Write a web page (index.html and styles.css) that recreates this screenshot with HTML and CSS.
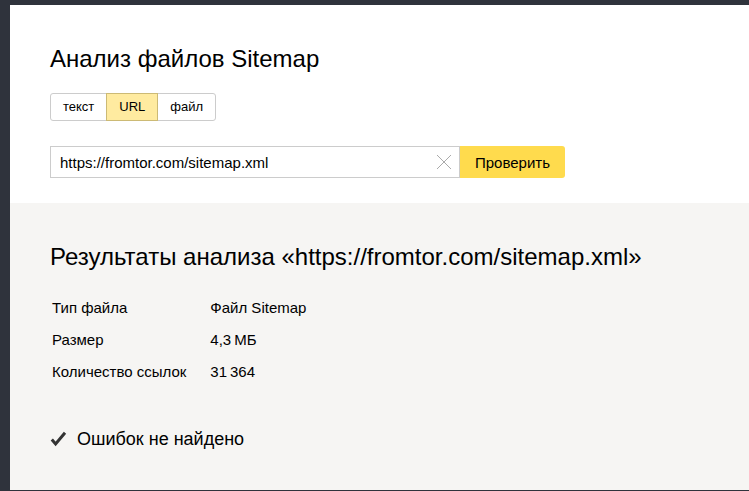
FILE: index.html
```html
<!DOCTYPE html>
<html lang="ru">
<head>
  <meta charset="UTF-8">
  <title>Анализ файлов Sitemap</title>
  <link rel="stylesheet" href="styles.css">
</head>
<body>
  <main class="page">
    <form class="check">
      <h1 class="title">Анализ файлов Sitemap</h1>

      <div class="tabs" role="radiogroup" aria-label="Источник">
        <label class="tab"><input type="radio" name="source" value="text">текст</label>
        <label class="tab"><input type="radio" name="source" value="url" checked>URL</label>
        <label class="tab"><input type="radio" name="source" value="file">файл</label>
      </div>

      <div class="search">
        <div class="search-field">
          <input class="search-input" type="text" aria-label="URL файла Sitemap" value="https://fromtor.com/sitemap.xml">
          <button class="search-clear" type="reset" aria-label="Очистить">
            <svg width="16" height="16" viewBox="0 0 16 16">
              <path d="M1 1l14 14M15 1L1 15" fill="none" stroke="#aaa" stroke-width="1"/>
            </svg>
          </button>
        </div>
        <button class="search-submit" type="button">Проверить</button>
      </div>
    </form>

    <section class="results">
      <h2 class="title">Результаты анализа «https://fromtor.com/sitemap.xml»</h2>

      <table class="info">
        <tr>
          <th scope="row">Тип файла</th>
          <td>Файл Sitemap</td>
        </tr>
        <tr>
          <th scope="row">Размер</th>
          <td>4,3&thinsp;МБ</td>
        </tr>
        <tr>
          <th scope="row">Количество ссылок</th>
          <td>31&thinsp;364</td>
        </tr>
      </table>

      <p class="status">
        <svg width="17" height="16" viewBox="0 0 17 16">
          <path d="M1.8 8.6l3.8 4.4L15 1.7" fill="none" stroke="#333" stroke-width="3"/>
        </svg>
        Ошибок не найдено
      </p>
    </section>
  </main>
</body>
</html>
```

FILE: styles.css
```css
* {
  box-sizing: border-box;
}

body {
  display: flex;
  min-height: 100vh;
  margin: 0;
  padding: 5px 0 1px 10px;
  background: #2f333c;
  color: #000;
  font-family: "Liberation Sans", Arial, sans-serif;
  font-size: 15px;
}

.page {
  display: flex;
  flex: 1;
  flex-direction: column;
  background: #fff;
}

.check {
  padding: 40px 40px 25px;
}

.title {
  margin: 0;
  font-size: 24px;
  font-weight: normal;
  line-height: 28px;
}

/* source switch */
.tabs {
  display: flex;
  width: fit-content;
  margin-top: 20px;
}

.tab {
  height: 28px;
  padding: 0 12px;
  border: 1px solid #ccc;
  font-size: 13px;
  line-height: 26px;
  cursor: pointer;
}

.tab + .tab {
  margin-left: -1px;
}

.tab:first-child {
  border-radius: 3px 0 0 3px;
}

.tab:last-child {
  border-radius: 0 3px 3px 0;
}

.tab:has(input:checked) {
  z-index: 1;
  border-color: #ccba75;
  background: #ffeba0;
}

.tab input {
  position: absolute;
  opacity: 0;
}

/* url field */
.search {
  display: flex;
  max-width: 515px;
  margin-top: 25px;
}

.search-field {
  display: flex;
  flex: 1;
  height: 32px;
  border: 1px solid #ccc;
  background: #fff;
}

.search-input {
  flex: 1;
  min-width: 0;
  padding: 0 9px;
  border: 0;
  outline: 0;
  background: none;
  font: inherit;
}

.search-clear {
  display: flex;
  align-items: center;
  padding: 0 7px;
  border: 0;
  background: none;
  cursor: pointer;
}

.search-submit {
  padding: 0 15px;
  border: 0;
  border-radius: 0 3px 3px 0;
  background: #ffdb4d;
  color: #000;
  font: inherit;
  cursor: pointer;
}

/* results */
.results {
  flex: 1;
  padding: 40px 40px 30px;
  background: #f6f5f3;
}

.info {
  margin-top: 20px;
  border-spacing: 0;
}

.info th,
.info td {
  height: 32px;
  padding: 0 24px 0 2px;
  font-weight: normal;
  text-align: left;
}

.info td {
  padding: 0;
}

.status {
  display: flex;
  align-items: center;
  gap: 10px;
  margin: 40px 0 0;
  font-size: 18px;
  line-height: 24px;
}
```
